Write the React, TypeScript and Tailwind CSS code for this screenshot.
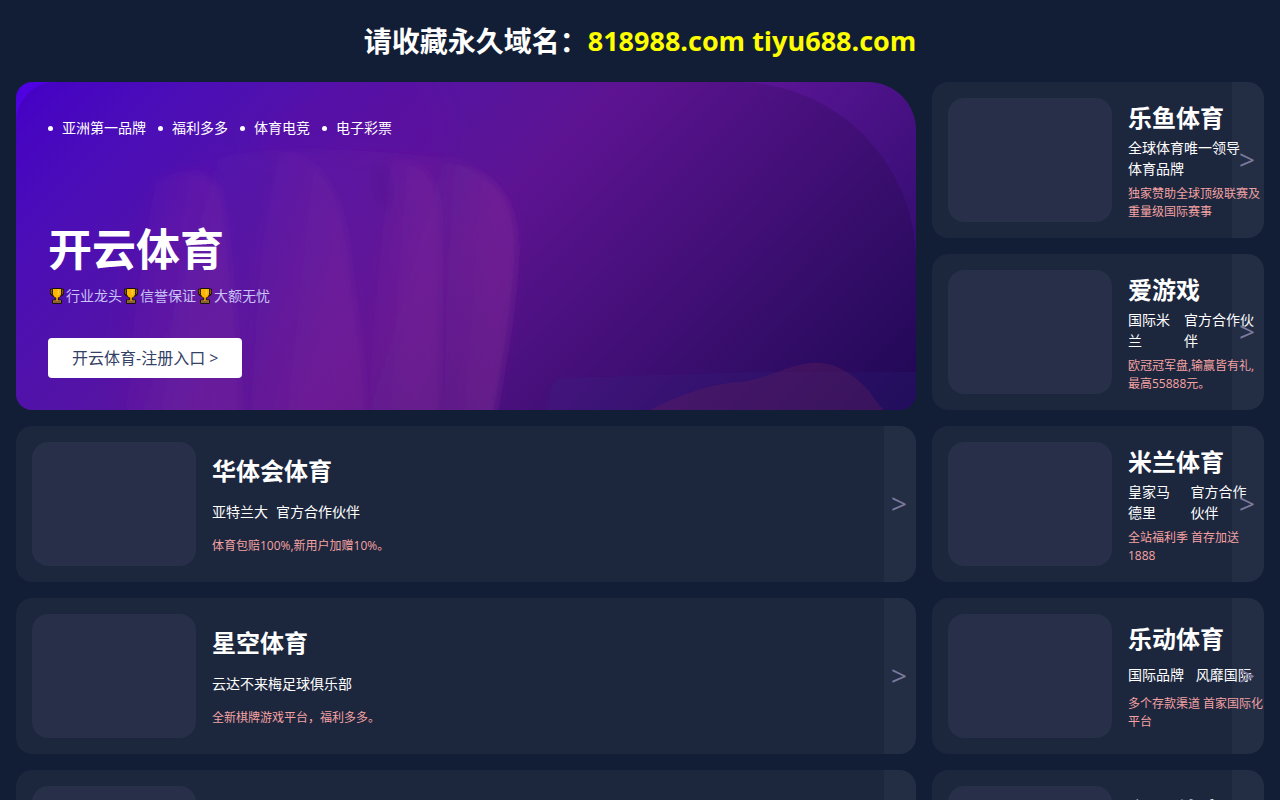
import React from 'react';

interface Brand {
  name: string;
  tags: string[];
  promo: string;
}

const features = ['亚洲第一品牌', '福利多多', '体育电竞', '电子彩票'];

const perks = ['行业龙头', '信誉保证', '大额无忧'];

const sideTop: Brand[] = [
  { name: '乐鱼体育', tags: ['全球体育唯一领导 体育品牌'], promo: '独家赞助全球顶级联赛及重量级国际赛事' },
  { name: '爱游戏', tags: ['国际米兰', '官方合作伙伴'], promo: '欧冠冠军盘,输赢皆有礼,最高55888元。' },
];

const rows: Brand[] = [
  { name: '华体会体育', tags: ['亚特兰大', '官方合作伙伴'], promo: '体育包赔100%,新用户加赠10%。' },
  { name: '米兰体育', tags: ['皇家马德里', '官方合作伙伴'], promo: '全站福利季 首存加送 1888' },
  { name: '星空体育', tags: ['云达不来梅足球俱乐部'], promo: '全新棋牌游戏平台，福利多多。' },
  { name: '乐动体育', tags: ['国际品牌\u00a0', '风靡国际'], promo: '多个存款渠道 首家国际化平台' },
  { name: '九游体育', tags: ['官方合作伙伴'], promo: '新用户注册即送好礼。' },
  { name: '必一体育', tags: ['国际品牌', '风靡国际'], promo: '多个存款渠道 新用户首存加赠' },
];

const TrophyIcon = () => (
  <svg viewBox="0 0 14 16" className="mx-0.5 h-4 w-3.5 shrink-0" aria-hidden="true">
    <path d="M3 1.800H.9v2.300c0 2 1.300 3.400 3.300 3.600M11 1.800h2.100v2.300c0 2-1.300 3.400-3.300 3.600" fill="none" stroke="#1a1206" strokeWidth="1.900" />
    <path d="M3 1.900H1.300v2.200c0 1.500.8 2.400 2.300 2.900M11 1.900h1.700v2.200c0 1.500-.8 2.400-2.300 2.900" fill="none" stroke="#c88a12" strokeWidth=".8" />
    <path d="M2.400.5h9.200v4.200c0 2.900-1.300 4.600-3.300 5.200v2.100h3.200v3.500h-9V12h3.200V9.900C3.700 9.300 2.400 7.600 2.400 4.700z" fill="#ffb400" stroke="#1a1206" strokeWidth="1" />
    <path d="M6.200 9.700h1.600v2.600H6.200z" fill="#c88a12" />
    <path d="M3.100 12.600h7.800v2.300H3.100z" fill="#8a6238" />
    <path d="M7.600 1.200h1.300v5.800H7.600z" fill="#ffd04d" />
  </svg>
);

// knuckles on the left, open palm along the bottom edge
const HeroArt = () => (
  <svg
    viewBox="0 0 900 328"
    preserveAspectRatio="none"
    className="absolute inset-0 h-full w-full"
    aria-hidden="true"
  >
    <defs>
      <filter id="soft" x="-20%" y="-20%" width="140%" height="140%">
        <feGaussianBlur stdDeviation="4" />
      </filter>
      <filter id="softer" x="-40%" y="-20%" width="180%" height="140%">
        <feGaussianBlur stdDeviation="14" />
      </filter>
      <linearGradient id="hand" x1="0" y1="0" x2="1" y2="0.2">
        <stop offset="0" stopColor="#8a2bc0" stopOpacity="0" />
        <stop offset="1" stopColor="#8c2ca8" stopOpacity="0.3" />
      </linearGradient>
      <linearGradient id="finger" x1="0" y1="0" x2="1" y2="0.25">
        <stop offset="0" stopColor="#a83ab4" stopOpacity="0" />
        <stop offset="0.8" stopColor="#a83ab4" stopOpacity="0.22" />
        <stop offset="1" stopColor="#a83ab4" stopOpacity="0.2" />
      </linearGradient>
    </defs>
    <path
      d="M90 345C94 250 100 140 150 90C220 60 330 64 434 77C474 88 501 115 501 167C500 220 487 290 476 345z"
      fill="url(#hand)"
      filter="url(#soft)"
    />
    <path d="M232 70C250 20 330 -20 400 -20C440 0 440 50 425 90C350 70 290 70 232 70z" fill="#8a22b0" fillOpacity=".12" filter="url(#softer)" />
    <path d="M140 100C170 80 204 90 207 120C214 190 226 260 224 345H110C110 240 130 150 140 100z" fill="url(#finger)" filter="url(#soft)" />
    <path d="M262 70C300 64 328 110 332 170C340 230 350 290 352 345H234C236 240 246 130 262 70z" fill="url(#finger)" filter="url(#soft)" />
    <path d="M376 78C410 76 424 100 424 140V345H352C356 240 366 150 376 78z" fill="url(#finger)" filter="url(#soft)" />
    <path d="M436 80C478 88 500 115 501 167C499 220 487 290 476 345H426C430 240 428 150 436 80z" fill="url(#finger)" filter="url(#soft)" />
    <path d="M358 82C372 84 378 110 372 128C362 124 356 104 358 82z" fill="#38007c" fillOpacity=".12" filter="url(#soft)" />
    <path d="M532 328C533 306 536 296 548 296L740 290H900V328z" fill="#3340a0" fillOpacity=".13" />
    <path
      d="M634 328C664 312 696 302 724 300C748 298 770 284 794 281C816 279 832 288 848 304C856 311 858 318 868 328z"
      fill="#7a2868"
      fillOpacity=".3"
    />
  </svg>
);

const Hero = () => (
  <section className="relative flex flex-col items-start overflow-hidden rounded-2xl rounded-tr-[48px] bg-linear-135 from-[#4e00e2] via-[#6a16a6] to-[#240960] p-8 lg:row-span-2">
    <HeroArt />
    <div className="absolute inset-0 rounded-tl-[40px] rounded-tr-[180px] bg-black/12"></div>
    <ul className="relative flex h-7 items-center gap-3 text-sm text-white">
      {features.map(item => (
        <li key={item} className="flex items-center gap-[9px]">
          <span className="size-[5px] rounded-full bg-white"></span>
          {item}
        </li>
      ))}
    </ul>
    <h1 className="relative mt-auto text-[44px] leading-[66px] font-bold text-white">开云体育</h1>
    <p className="relative mt-1 flex items-center text-sm leading-5 text-[#c9c3f7]">
      {perks.map(perk => (
        <React.Fragment key={perk}>
          <TrophyIcon />
          {perk}
        </React.Fragment>
      ))}
    </p>
    <a href="#register" className="relative mt-8 flex h-10 items-center rounded bg-white px-6 text-base text-[#334166]">
      开云体育-注册入口 &gt;
    </a>
  </section>
);

const BrandCard: React.FC<{ brand: Brand }> = ({ brand }) => (
  <a href="#brand" className="relative flex gap-4 overflow-hidden rounded-2xl bg-[#1c263d] p-4">
    <div className="h-[124px] w-[164px] shrink-0 rounded-2xl bg-[#273048]"></div>
    <div className="-mr-4 flex min-w-0 flex-1 flex-col justify-evenly">
      <h2 className="text-2xl leading-9 font-bold text-white">{brand.name}</h2>
      <div className="mb-1 flex text-sm leading-[21px] text-white">
        {brand.tags.map(tag => (
          <span key={tag} className="mr-2">{tag}</span>
        ))}
      </div>
      <p className="text-xs leading-[18px] text-[#f5a3a3]">{brand.promo}</p>
    </div>
    <div className="absolute inset-y-0 right-0 flex w-8 items-center justify-center bg-[#8090a8]/8 pr-0.5 pb-0.5 text-[28px] text-[#7c7a9c]">
      &gt;
    </div>
  </a>
);

const App = () => {
  return (
    <div className="min-h-screen bg-[#121e35] font-['Open_Sans','Noto_Sans_CJK_SC',sans-serif]">
      <header className="flex flex-wrap items-center justify-center px-4 py-5 text-[28px] leading-[42px] font-bold text-white">
        <span>请收藏永久域名：</span>
        <a href="#home" className="text-[27px] text-[#ffff00]">818988.com tiyu688.com</a>
      </header>
      <main className="grid gap-4 px-4 pb-4 lg:grid-cols-[1fr_332px]">
        <Hero />
        {sideTop.map(brand => <BrandCard key={brand.name} brand={brand} />)}
        {rows.map(brand => <BrandCard key={brand.name} brand={brand} />)}
      </main>
    </div>
  );
};

export default App;
